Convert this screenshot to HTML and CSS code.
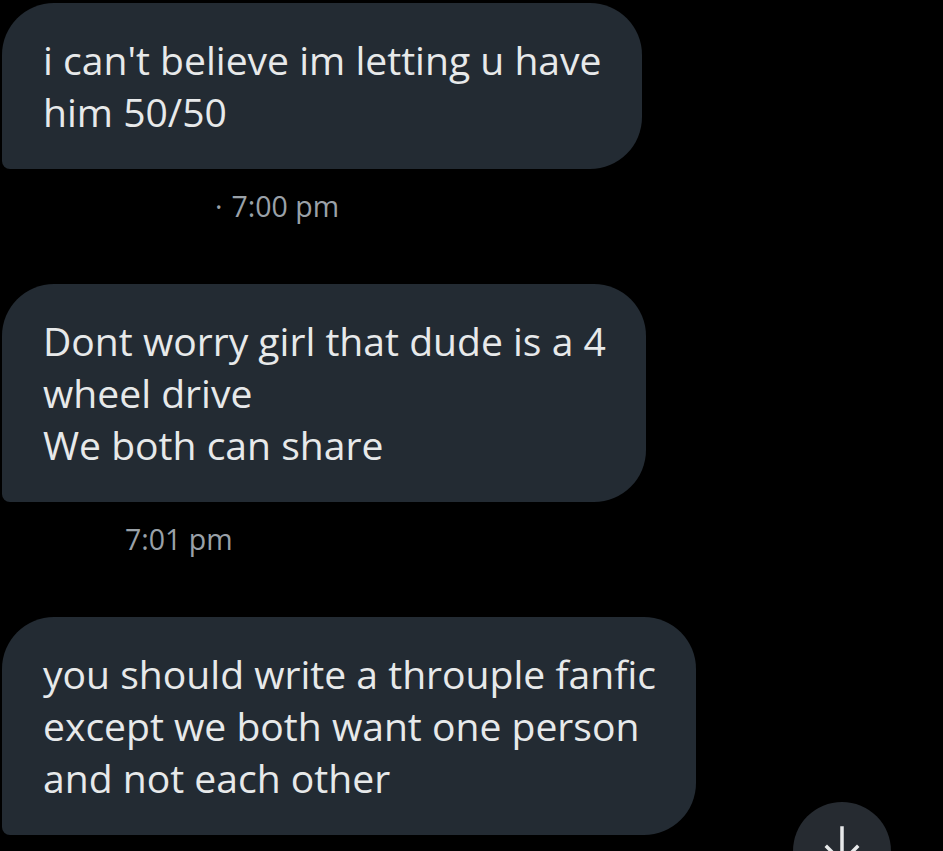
FILE: index.html
```html
<!DOCTYPE html>
<html>
<head>
<meta charset="utf-8">
<link rel="stylesheet" href="styles.css">
</head>
<body>
<main class="thread">
  <div class="msg">
    <div class="bubble">i can't believe im letting u have<br>him 50/50</div>
    <div class="time time-first"><span class="dot">·</span>7:00 pm</div>
  </div>
  <div class="msg">
    <div class="bubble">Dont worry girl that dude is a 4<br>wheel drive<br>We both can share</div>
    <div class="time time-second">7:01 pm</div>
  </div>
  <div class="msg">
    <div class="bubble">you should write a throuple fanfic<br>except we both want one person<br>and not each other</div>
  </div>
</main>
<button class="scroll-down" aria-label="Scroll down">
  <svg width="40" height="40" viewBox="0 0 40 40" fill="none" stroke="#e7e9ea" stroke-width="3.5" stroke-linecap="square">
    <path d="M20 2 V36 M5 21 L20 36 L35 21"/>
  </svg>
</button>
</body>
</html>
```
FILE: styles.css
```css
html, body {
  margin: 0;
  padding: 0;
  background: #000;
  height: 100%;
  overflow: hidden;
}
body {
  font-family: "Open Sans", "Noto Sans", sans-serif;
  color: #e7e9ea;
  position: relative;
}
.thread {
  display: flex;
  flex-direction: column;
  padding: 3px 0 0 2px;
}
.msg {
  display: flex;
  flex-direction: column;
}
.bubble {
  width: fit-content;
  background: #232b33;
  border-radius: 52px 52px 52px 8px;
  padding: 31px 40px 31px 41px;
  font-size: 39.1px;
  line-height: 52px;
  white-space: nowrap;
}
.time {
  color: #9aa1a8;
  font-size: 28.5px;
  line-height: 32px;
  margin: 21px 0 62px;
}
.time-first { padding-left: 213px; }
.time-second { padding-left: 123px; }
.dot { margin-right: 9px; }
.scroll-down {
  position: absolute;
  left: 793px;
  top: 802px;
  width: 98px;
  height: 98px;
  border-radius: 50%;
  border: 0;
  padding: 0;
  background: #262b31;
  display: flex;
  align-items: flex-start;
  justify-content: center;
  padding-top: 24px;
}
```
